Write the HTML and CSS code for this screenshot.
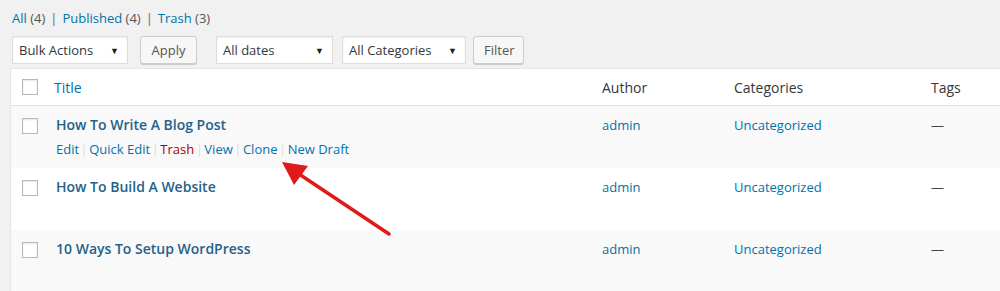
FILE: index.html
```html
<!DOCTYPE html>
<html lang="en">
<head>
    <meta charset="UTF-8">
    <title>Posts</title>
    <link rel="stylesheet" href="styles.css">
</head>
<body>
    <div class="wrap">
        <ul class="subsubsub">
            <li><a href="#">All <span class="count">(4)</span></a><span class="bar">|</span></li>
            <li><a href="#">Published <span class="count">(4)</span></a><span class="bar">|</span></li>
            <li><a href="#">Trash <span class="count">(3)</span></a></li>
        </ul>

        <div class="tablenav">
            <div class="select bulk">Bulk Actions <span class="caret">&#9660;</span></div>
            <button class="button apply">Apply</button>
            <div class="select dates">All dates <span class="caret">&#9660;</span></div>
            <div class="select cats">All Categories <span class="caret">&#9660;</span></div>
            <button class="button filter">Filter</button>
        </div>

        <table class="posts">
            <thead>
                <tr>
                    <th class="check"><span class="box"></span></th>
                    <th class="col-title"><a href="#">Title</a></th>
                    <th class="col-author">Author</th>
                    <th class="col-cats">Categories</th>
                    <th class="col-tags">Tags</th>
                </tr>
            </thead>
            <tbody>
                <tr class="alt">
                    <td class="check"><span class="box"></span></td>
                    <td class="col-title">
                        <a class="row-title" href="#">How To Write A Blog Post</a>
                        <div class="row-actions">
                            <a href="#">Edit</a><span class="sep">|</span><a href="#">Quick Edit</a><span class="sep">|</span><a class="trash" href="#">Trash</a><span class="sep">|</span><a href="#">View</a><span class="sep">|</span><a href="#">Clone</a><span class="sep">|</span><a href="#">New Draft</a>
                        </div>
                    </td>
                    <td class="col-author"><a href="#">admin</a></td>
                    <td class="col-cats"><a href="#">Uncategorized</a></td>
                    <td class="col-tags">&mdash;</td>
                </tr>
                <tr>
                    <td class="check"><span class="box"></span></td>
                    <td class="col-title"><a class="row-title" href="#">How To Build A Website</a></td>
                    <td class="col-author"><a href="#">admin</a></td>
                    <td class="col-cats"><a href="#">Uncategorized</a></td>
                    <td class="col-tags">&mdash;</td>
                </tr>
                <tr class="alt">
                    <td class="check"><span class="box"></span></td>
                    <td class="col-title"><a class="row-title" href="#">10 Ways To Setup WordPress</a></td>
                    <td class="col-author"><a href="#">admin</a></td>
                    <td class="col-cats"><a href="#">Uncategorized</a></td>
                    <td class="col-tags">&mdash;</td>
                </tr>
            </tbody>
        </table>

        <svg class="arrow" width="130" height="90" viewBox="0 0 130 90">
            <line x1="115" y1="79" x2="22" y2="17" stroke="#e0191b" stroke-width="3.5" stroke-linecap="round"/>
            <polygon points="8,7 34,11 20,30" fill="#e0191b"/>
        </svg>
    </div>
</body>
</html>
```

FILE: styles.css
```css
body {
    margin: 0;
    background: #f1f1f1;
    font-family: "Open Sans", sans-serif;
    font-size: 13px;
    color: #444;
    overflow: hidden;
}
a {
    color: #0073aa;
    text-decoration: none;
}
.wrap {
    position: relative;
    padding: 0 0 0 10px;
}

/* status links */
.subsubsub {
    list-style: none;
    margin: 0;
    padding: 9px 0 0 2px;
    height: 24px;
    display: flex;
    color: #666;
}
.subsubsub .count {
    color: #555;
}
.subsubsub .bar {
    margin: 0 5px 0 5px;
}

/* filters */
.tablenav {
    display: flex;
    align-items: center;
    height: 34px;
    padding-left: 2px;
}
.select {
    box-sizing: border-box;
    height: 28px;
    background: #fff;
    border: 1px solid #ddd;
    box-shadow: inset 0 1px 2px rgba(0,0,0,.07);
    font-size: 13px;
    color: #32373c;
    display: flex;
    align-items: center;
    justify-content: space-between;
    padding: 0 8px 0 6px;
}
.caret {
    font-size: 9px;
    color: #222;
}
.bulk { width: 116px; }
.dates { width: 117px; }
.cats { width: 124px; margin-left: 9px; }
.button {
    box-sizing: border-box;
    height: 28px;
    background: #f7f7f7;
    border: 1px solid #ccc;
    border-radius: 3px;
    box-shadow: 0 1px 0 #ccc;
    font-family: inherit;
    font-size: 13px;
    color: #555;
    padding: 0 10px;
}
.apply { width: 57px; margin: 0 19px 0 12px; }
.filter { width: 51px; margin-left: 7px; }

/* table */
.posts {
    border-collapse: collapse;
    table-layout: fixed;
    width: 1000px;
    margin-top: 1px;
    background: #fff;
    border: 1px solid #e5e5e5;
    font-size: 13px;
}
.posts th {
    height: 36px;
    text-align: left;
    font-weight: normal;
    font-size: 14px;
    color: #32373c;
    border-bottom: 1px solid #e1e1e1;
    padding: 0;
}
.posts td {
    vertical-align: top;
    height: 52px;
    padding: 0;
}
.posts tr.alt td {
    background: #f9f9f9;
}
.check {
    width: 43px;
}
.box {
    display: block;
    box-sizing: border-box;
    width: 16px;
    height: 16px;
    margin-left: 11px;
    border: 1px solid #b4b9be;
    background: #fff;
    box-shadow: inset 0 1px 2px rgba(0,0,0,.1);
}
td.check .box {
    margin-top: 12px;
}
.posts td.check {
    height: 61px;
}
.col-title { width: 548px; }
.col-author { width: 132px; }
.col-cats { width: 197px; }
td.col-title {
    padding-top: 9px;
    padding-left: 2px;
}
td.col-author,
td.col-cats,
td.col-tags {
    padding-top: 10px;
}
.row-title {
    font-weight: 600;
    font-size: 14px;
    color: #24628a;
}
.row-actions {
    margin-top: 6px;
    font-size: 13px;
}
.row-actions .sep {
    color: #ddd;
    margin: 0 1.5px;
}
.row-actions .trash {
    color: #a00;
}
.col-tags {
    color: #444;
}

.arrow {
    position: absolute;
    left: 274px;
    top: 155px;
}
```
